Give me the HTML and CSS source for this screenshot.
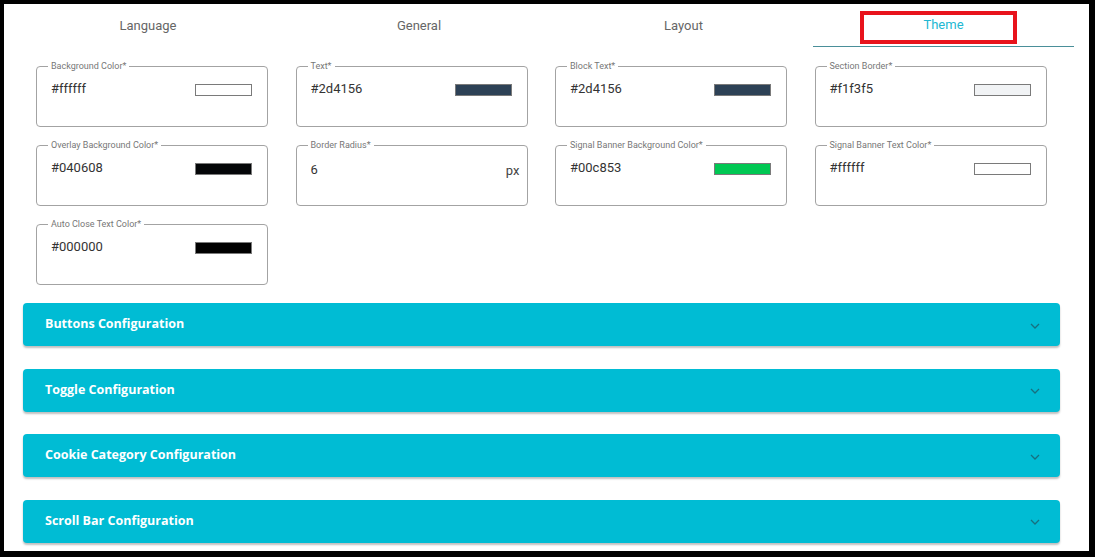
FILE: index.html
```html
<!DOCTYPE html>
<html>
<head>
<meta charset="utf-8">
<link rel="stylesheet" href="styles.css">
</head>
<body>
<div class="page">
  <div class="tabs">
    <div class="tab">Language</div>
    <div class="tab">General</div>
    <div class="tab">Layout</div>
    <div class="tab active">Theme<span class="mark"></span></div>
  </div>

  <div class="fields">
    <div class="field"><span class="label">Background Color*</span><div class="row"><span class="value">#ffffff</span><span class="swatch" style="background:#ffffff"></span></div></div>
    <div class="field"><span class="label">Text*</span><div class="row"><span class="value">#2d4156</span><span class="swatch" style="background:#2d4156"></span></div></div>
    <div class="field"><span class="label">Block Text*</span><div class="row"><span class="value">#2d4156</span><span class="swatch" style="background:#2d4156"></span></div></div>
    <div class="field"><span class="label">Section Border*</span><div class="row"><span class="value">#f1f3f5</span><span class="swatch" style="background:#f1f3f5"></span></div></div>

    <div class="field"><span class="label">Overlay Background Color*</span><div class="row"><span class="value">#040608</span><span class="swatch" style="background:#040608"></span></div></div>
    <div class="field"><span class="label">Border Radius*</span><div class="row px-row"><span class="value">6</span><span class="unit">px</span></div></div>
    <div class="field"><span class="label">Signal Banner Background Color*</span><div class="row"><span class="value">#00c853</span><span class="swatch" style="background:#00c853"></span></div></div>
    <div class="field"><span class="label">Signal Banner Text Color*</span><div class="row"><span class="value">#ffffff</span><span class="swatch" style="background:#ffffff"></span></div></div>

    <div class="field"><span class="label">Auto Close Text Color*</span><div class="row"><span class="value">#000000</span><span class="swatch" style="background:#000000"></span></div></div>
  </div>

  <div class="accordions">
    <div class="acc"><span class="acc-title">Buttons Configuration</span><svg class="chev" width="10" height="6" viewBox="0 0 10 6"><polyline points="1,1 5,5 9,1" fill="none" stroke="#17707f" stroke-width="1.3"/></svg></div>
    <div class="acc"><span class="acc-title">Toggle Configuration</span><svg class="chev" width="10" height="6" viewBox="0 0 10 6"><polyline points="1,1 5,5 9,1" fill="none" stroke="#17707f" stroke-width="1.3"/></svg></div>
    <div class="acc"><span class="acc-title">Cookie Category Configuration</span><svg class="chev" width="10" height="6" viewBox="0 0 10 6"><polyline points="1,1 5,5 9,1" fill="none" stroke="#17707f" stroke-width="1.3"/></svg></div>
    <div class="acc"><span class="acc-title">Scroll Bar Configuration</span><svg class="chev" width="10" height="6" viewBox="0 0 10 6"><polyline points="1,1 5,5 9,1" fill="none" stroke="#17707f" stroke-width="1.3"/></svg></div>
  </div>
</div>
</body>
</html>
```

FILE: styles.css
```css
html, body {
  margin: 0;
  padding: 0;
}
body {
  background: #000;
  padding: 4px 6px 6px 4px;
  width: 1095px;
  height: 557px;
  box-sizing: border-box;
  overflow: hidden;
  font-family: Roboto, "Liberation Sans", sans-serif;
}
.page {
  background: #fff;
  width: 1085px;
  height: 547px;
  overflow: hidden;
}
.tabs {
  display: grid;
  grid-template-columns: 272px 270px 259px 261px;
  margin-left: 8px;
  height: 43px;
}
.tab {
  position: relative;
  display: flex;
  align-items: center;
  justify-content: center;
  font-size: 13px;
  color: #666;
  padding-bottom: 1px;
}
.tab.active {
  color: #22b8d2;
  border-bottom: 1px solid #4a8f99;
}
.mark {
  position: absolute;
  left: 47px;
  top: 7px;
  width: 157px;
  height: 33px;
  box-sizing: border-box;
  border: 4px solid #e8131c;
}
.fields {
  display: grid;
  grid-template-columns: repeat(4, 232px);
  column-gap: 27.5px;
  row-gap: 18px;
  margin: 19px 0 0 32px;
}
.field {
  position: relative;
  height: 61px;
  box-sizing: border-box;
  border: 1px solid #a3a3a3;
  border-radius: 4px;
}
.label {
  position: absolute;
  top: -7px;
  left: 11px;
  padding: 0 3px;
  background: #fff;
  font-size: 9px;
  line-height: 12px;
  color: #777;
}
.row {
  display: flex;
  justify-content: space-between;
  align-items: flex-start;
  padding: 14px 15px 0 14px;
}
.value {
  font-size: 13px;
  line-height: 16px;
  color: #333;
}
.swatch {
  margin-top: 3px;
  width: 57px;
  height: 12px;
  box-sizing: border-box;
  border: 1px solid #7a7a7a;
}
.px-row {
  padding-right: 7px;
  align-items: center;
}
.unit {
  font-size: 13px;
  line-height: 16px;
  color: #444;
  margin-top: 3px;
}
.accordions {
  display: flex;
  flex-direction: column;
  gap: 22.6px;
  margin: 18px 0 0 19px;
  width: 1037px;
}
.acc {
  height: 43px;
  background: #00bcd4;
  border-radius: 4px;
  box-shadow: 0 2px 2px rgba(0, 0, 0, 0.25);
  display: flex;
  align-items: center;
  justify-content: space-between;
  padding: 0 20px 0 22px;
}
.acc-title {
  font-family: "Open Sans", "Liberation Sans", sans-serif;
  font-weight: 700;
  font-size: 12.5px;
  color: #fff;
  margin-top: -2px;
}
.chev {
  margin-top: 2px;
}
```
